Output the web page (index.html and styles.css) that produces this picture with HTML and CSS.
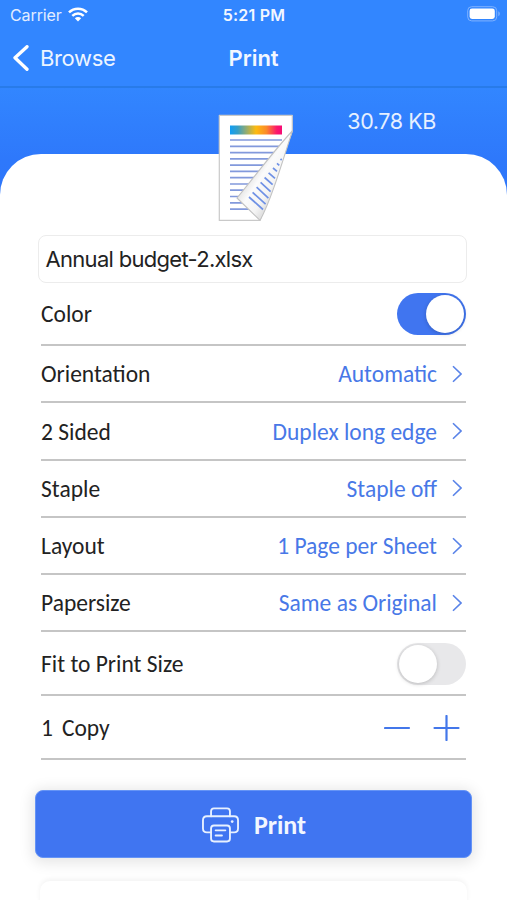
FILE: index.html
```html
<!DOCTYPE html>
<html lang="en">
<head>
<meta charset="utf-8">
<title>Print</title>
<link rel="stylesheet" href="styles.css">
</head>
<body>
<main class="screen">
  <header class="top">
    <div class="status">
      <span class="carrier">Carrier
        <svg class="wifi" width="20" height="15" viewBox="0 0 20 15"><g fill="none" stroke="#fff" stroke-width="2.5"><path d="M1 5.4C6 .4 14 .4 19 5.4"/><path d="M4.3 8.9C7.6 5.7 12.4 5.7 15.7 8.9"/></g><path d="M6.8 11.2c1.8-1.7 4.6-1.7 6.4 0L10 14.5z" fill="#fff"/></svg>
      </span>
      <span class="time">5:21 PM</span>
      <svg class="battery" width="34" height="16" viewBox="0 0 34 16"><rect x=".7" y=".7" width="29" height="14.2" rx="4" fill="none" stroke="#7fb2ff" stroke-width="1"/><rect x="2.6" y="2.6" width="25.2" height="10.4" rx="2.4" fill="#fff"/><path d="M31.3 5.3c2 .8 2 4.2 0 5z" fill="#7fb2ff"/></svg>
    </div>
    <nav class="nav">
      <a class="back"><svg width="17" height="27" viewBox="0 0 17 27"><path d="M15 1.700 3 12.800l12 11.500" fill="none" stroke="#fff" stroke-width="3.3" stroke-linecap="round" stroke-linejoin="round"/></svg><span>Browse</span></a>
      <h1>Print</h1>
    </nav>
  </header>
  <section class="hero">
    <svg class="document" width="78" height="110" viewBox="217 113 78 110">
      <defs>
        <linearGradient id="rainbow"><stop stop-color="#109ef5"/><stop offset=".15" stop-color="#379fc5"/><stop offset=".5" stop-color="#fdbb10"/><stop offset=".7" stop-color="#fb8b29"/><stop offset=".9" stop-color="#fb176b"/><stop offset="1" stop-color="#f50b75"/></linearGradient>
        <linearGradient id="flap" gradientUnits="userSpaceOnUse" x1="256" y1="172" x2="279" y2="187"><stop stop-color="#ebebeb"/><stop offset=".25" stop-color="#fbfbfb"/><stop offset=".75" stop-color="#f4f4f4"/><stop offset="1" stop-color="#e2e2e2"/></linearGradient>
        <clipPath id="page"><path d="M219 115H292V131L237 198l23 22H219z"/></clipPath>
      </defs>
      <path d="M219.3 115.3H292.3V131L260 220.4H219.3z" fill="#fff" stroke="#c9c9c9" stroke-width="1.2" stroke-linejoin="round"/>
      <rect x="230" y="125.5" width="52" height="9" fill="url(#rainbow)"/>
      <path clip-path="url(#page)" d="M230 140h52M230 146.3h52M230 152.6h52M230 158.8h52M230 165.1h52M230 171.4h52M230 177.7h52M230 184h52M230 190.2h52M230 196.5h52M230 202.8h52M230 209.1h52" stroke="#8299dc" stroke-width="1.7"/>
      <path d="M292.3 131C277 147 259 171 237 198l23 22.4C270 202 279 173 292.300 131z" fill="url(#flap)" stroke="#c2c2c2" stroke-width="1.1" stroke-linejoin="round"/>
      <path d="M249 197l14 12.5M252.6 192.4l13 11.8M256.6 187.2l11.8 11M260.6 182.4l10 9.2M264.6 177.5l8 7.2M268.6 172.8l6.4 5.6M273 168l4 3.4M277 163.3l2.3 2M280.5 159l1.2 1" stroke="#6f91e5" stroke-width="1.7"/>
    </svg>
    <span class="size">30.78 KB</span>
  </section>
  <section class="sheet">
    <div class="filename">Annual budget-2.xlsx</div>
    <div class="row first"><span>Color</span><span class="switch on"><i></i></span></div>
    <div class="row"><span>Orientation</span><span class="value">Automatic<svg class="chevron" viewBox="0 0 10 18"><path d="M1 1.2 9 9l-8 7.8"/></svg></span></div>
    <div class="row"><span>2 Sided</span><span class="value">Duplex long edge<svg class="chevron" viewBox="0 0 10 18"><path d="M1 1.2 9 9l-8 7.8"/></svg></span></div>
    <div class="row"><span>Staple</span><span class="value">Staple off<svg class="chevron" viewBox="0 0 10 18"><path d="M1 1.2 9 9l-8 7.8"/></svg></span></div>
    <div class="row"><span>Layout</span><span class="value">1 Page per Sheet<svg class="chevron" viewBox="0 0 10 18"><path d="M1 1.2 9 9l-8 7.8"/></svg></span></div>
    <div class="row"><span>Papersize</span><span class="value">Same as Original<svg class="chevron" viewBox="0 0 10 18"><path d="M1 1.2 9 9l-8 7.8"/></svg></span></div>
    <div class="row fit"><span>Fit to Print Size</span><span class="switch"><i></i></span></div>
    <div class="row copies"><span class="count">1<span>Copy</span></span>
      <svg class="stepper" width="76" height="26" viewBox="0 0 76 26"><path d="M1 13h24M50.500 13h24M62.500 1v24" fill="none" stroke="#4377ea" stroke-width="2.200" stroke-linecap="round"/></svg>
    </div>
    <button class="print">
      <svg width="37" height="36" viewBox="0 0 38 36"><g fill="none" stroke="#e8f1ff" stroke-width="1.9" stroke-linecap="round" stroke-linejoin="round"><path d="M9.300 9V4q0-3 3-3h13.400q3 0 3 3v5"/><path d="M9.300 25.500H5q-4 0-4-4V13q0-4 4-4h28q4 0 4 4v8.500q0 4-4 4h-4.300"/><rect x="9.300" y="18.500" width="19.400" height="16.400" rx="3"/><path d="M14 23.500h10M14 28.800h6.500"/></g><circle cx="31" cy="14.500" r="1.400" fill="#e8f1ff"/></svg>
      <span>Print</span>
    </button>
    <div class="next-card"></div>
  </section>
</main>
</body>
</html>
```
FILE: styles.css
```css
* { box-sizing: border-box; }
body { margin: 0; background: #fff; }
.screen {
  width: 507px;
  height: 900px;
  overflow: hidden;
  display: flex;
  flex-direction: column;
  font-family: Carlito, Lato, sans-serif;
  color: #222;
  background: linear-gradient(#3286ff 0, #3286ff 88px, #2e78fb 160px, #2e76fa 200px, #fff 201px);
}
.top { height: 88px; border-bottom: 2px solid #287be9; font-family: Inter, sans-serif; color: #fff; }
.status {
  height: 30px;
  padding: 0 9px 0 10px;
  display: grid;
  grid-template-columns: 1fr auto 1fr;
  align-items: center;
  font-size: 16px;
}
.carrier { display: flex; align-items: center; gap: 6px; color: #e2edff; letter-spacing: -.1px; }
.wifi { margin-top: -1px; }
.time { font-weight: 600; letter-spacing: .2px; color: #f2f7ff; }
.battery { justify-self: end; margin: -2px -3px 0 0; }
.nav {
  height: 56px;
  padding-left: 12px;
  display: grid;
  grid-template-columns: 216.5px auto 1fr;
  align-items: center;
  font-size: 22px;
}
.back { display: flex; align-items: center; gap: 11px; color: #edf5ff; letter-spacing: -.35px; }
.nav h1 { margin: -1px 0 0; font-size: 22px; font-weight: 600; color: #f2f7ff; }
.back span { margin-top: -1px; }
.hero {
  height: 66px;
  flex: none;
  padding: 25px 71px 0 217px;
  display: flex;
  justify-content: space-between;
  align-items: flex-start;
  position: relative;
  z-index: 1;
  font-family: Inter, sans-serif;
}
.size { color: #e6f0ff; font-size: 21.500px; line-height: 18px; letter-spacing: -.4px; margin-top: -1px; }
.document { display: block; flex: none; }
.sheet {
  flex: 1;
  padding: 81px 41px 0;
  border-radius: 41px 41px 0 0;
  background: #fff;
}
.filename {
  height: 48px;
  margin: 0 -1px 0 -3px;
  padding-left: 6.500px;
  border: 1.500px solid #ececec;
  border-radius: 8px;
  font: 22px/46px Inter, sans-serif;
  letter-spacing: -.7px;
}
.row {
  height: 57.250px;
  padding-top: 1.500px;
  border-bottom: 2px solid #c5c5c5;
  display: flex;
  justify-content: space-between;
  align-items: center;
  font-size: 23.500px;
  line-height: 28px;
}
.row.first { height: 63px; padding-top: 0; }
.row.fit { height: 63.500px; }
.row.copies { height: 64.500px; padding-right: 6px; }
.value { display: flex; align-items: center; color: #4878e7; }
.chevron {
  width: 10px;
  height: 18px;
  margin: -1px 4px 0 15px;
  fill: none;
  stroke: #5983e8;
  stroke-width: 1.600;
}
.switch { width: 69px; height: 42px; border-radius: 21px; padding: 2px; display: flex; background: #e8e8ea; }
.switch i {
  width: 38px;
  height: 38px;
  border-radius: 50%;
  background: #fff;
  box-shadow: 0 1px 4px #0003;
}
.switch.on { justify-content: flex-end; background: #4075f0; }
.count { display: flex; gap: 9px; }
.print {
  width: 437px;
  height: 68px;
  margin: 30px 0 0 -6px;
  padding: 1px 0 0 1px;
  border: 1px solid #6594f6;
  border-radius: 8px;
  display: flex;
  align-items: center;
  justify-content: center;
  gap: 15px;
  background: #4075f1;
  color: #f2f7ff;
  font: 700 26px Carlito, Lato, sans-serif;
  box-shadow: 0 2px 14px 3px #0000001a;
}
.next-card {
  height: 30px;
  margin: 23px -1px 0;
  border-radius: 10px;
  background: #fff;
  box-shadow: 0 -2px 5px #0000000d;
}
```
